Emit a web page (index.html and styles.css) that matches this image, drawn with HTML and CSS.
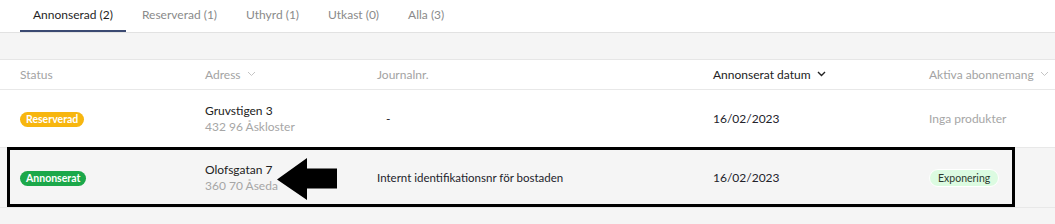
FILE: index.html
```html
<!DOCTYPE html>
<html lang="sv">
<head>
<meta charset="utf-8">
<title>Annonser</title>
<link rel="stylesheet" href="styles.css">
</head>
<body>
<div class="page">
  <nav class="tabs">
    <div class="tab active">Annonserad (2)</div>
    <div class="tab">Reserverad (1)</div>
    <div class="tab">Uthyrd (1)</div>
    <div class="tab">Utkast (0)</div>
    <div class="tab">Alla (3)</div>
  </nav>
  <div class="spacer"></div>
  <div class="table">
    <div class="row head">
      <div class="cell">Status</div>
      <div class="cell">Adress <span class="chev light"><svg width="9" height="6" viewBox="0 0 9 6"><path d="M1 1l3.5 3.5L8 1" fill="none" stroke="currentColor" stroke-width="1"/></svg></span></div>
      <div class="cell">Journalnr.</div>
      <div class="cell sorted">Annonserat datum <span class="chev"><svg width="9" height="6" viewBox="0 0 9 6"><path d="M1 1l3.5 3.5L8 1" fill="none" stroke="currentColor" stroke-width="1.4"/></svg></span></div>
      <div class="cell">Aktiva abonnemang <span class="chev light"><svg width="9" height="6" viewBox="0 0 9 6"><path d="M1 1l3.5 3.5L8 1" fill="none" stroke="currentColor" stroke-width="1"/></svg></span></div>
    </div>
    <div class="row">
      <div class="cell"><span class="badge yellow">Reserverad</span></div>
      <div class="cell addr"><div class="street">Gruvstigen 3</div><div class="city">432 96 Åskloster</div></div>
      <div class="cell dash">-</div>
      <div class="cell">16/02/2023</div>
      <div class="cell muted">Inga produkter</div>
    </div>
    <div class="row hover">
      <div class="cell"><span class="badge green">Annonserat</span></div>
      <div class="cell addr"><div class="street">Olofsgatan 7</div><div class="city">360 70 Åseda</div></div>
      <div class="cell journal">Internt identifikationsnr för bostaden</div>
      <div class="cell">16/02/2023</div>
      <div class="cell"><span class="pill">Exponering</span></div>
      <div class="highlight"></div>
      <svg class="arrow" width="62" height="44" viewBox="0 0 62 44"><path d="M0 21.5L30 0V10.5H60V30.5H30V42Z" fill="#000"/></svg>
    </div>
  </div>
</div>
</body>
</html>
```
FILE: styles.css
```css
* { box-sizing: border-box; }
html, body { margin: 0; padding: 0; }
body {
  width: 1055px;
  height: 224px;
  overflow: hidden;
  background: #f5f5f5;
  font-family: Lato, "Open Sans", sans-serif;
  font-size: 12px;
  color: #23232b;
}
.page { display: flex; flex-direction: column; }
.tabs {
  display: flex;
  height: 33px;
  padding-left: 20px;
  background: #fff;
  border-bottom: 1px solid #e2e2e2;
  gap: 3px;
}
.tab {
  padding: 0 13px;
  line-height: 30px;
  height: 32px;
  color: #8a8a8a;
  border-bottom: 2px solid transparent;
}
.tab.active {
  color: #1f1f1f;
  border-bottom-color: #3b4a72;
}
.spacer {
  height: 27px;
  background: #f5f5f5;
  border-bottom: 1px solid #e6e6e6;
}
.table { display: flex; flex-direction: column; }
.row {
  display: grid;
  grid-template-columns: 185px 172px 336px 216px 1fr;
  padding-left: 20px;
  align-items: center;
  background: #fff;
  border-bottom: 1px solid #e8e8e8;
  height: 58px;
  position: relative;
}
.row.head {
  height: 30px;
  color: #a3a3a3;
}
.row.hover { background: #f5f5f5; height: 60px; }
.cell { white-space: nowrap; }
.cell.sorted { color: #222; }
.journal { font-size: 11.5px; }
.chev { display: inline-block; margin-left: 3px; vertical-align: 2px; }
.chev svg { display: block; }
.chev.light { color: #c4c4c4; }
.street { color: #222; line-height: 16px; }
.city { color: #a6a6a6; line-height: 16px; }
.dash { padding-left: 9px; }
.muted { color: #a6a6a6; }
.badge {
  display: inline-block;
  padding: 0 6px;
  border-radius: 8px;
  color: #fff;
  font-weight: 700;
  font-size: 10.5px;
  line-height: 15px;
}
.badge.yellow { background: #f7b60f; }
.badge.green { background: #1ca84a; }
.pill {
  display: inline-block;
  padding: 0 8px;
  border-radius: 9px;
  border: 1px solid #fff;
  background: #dcfbe1;
  color: #2d3a2f;
  font-size: 10.5px;
  line-height: 16px;
}
.highlight {
  position: absolute;
  left: 7px;
  top: -1px;
  width: 1008px;
  height: 60px;
  border: 3px solid #000;
  pointer-events: none;
}
.arrow {
  position: absolute;
  left: 277px;
  top: 10px;
}
```
